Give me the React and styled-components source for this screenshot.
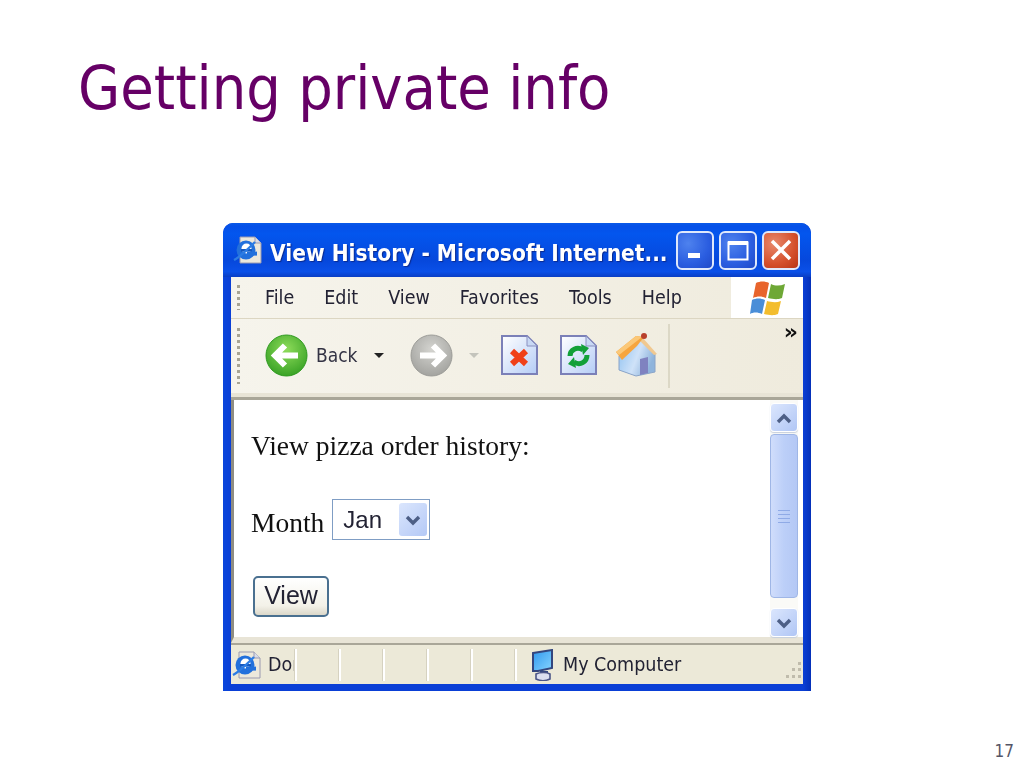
import React from 'react';
import styled, { createGlobalStyle } from 'styled-components';

const uiFont = '"DejaVu Sans Condensed", "DejaVu Sans", sans-serif';

const GlobalStyle = createGlobalStyle`
  html, body {
    margin: 0;
    padding: 0;
    background: #ffffff;
  }
`;

const Slide = styled.div`
  width: 1024px;
  height: 768px;
  display: flex;
  flex-direction: column;
  overflow: hidden;
`;

const Title = styled.h1`
  margin: 0;
  padding: 48px 0 0 78px;
  height: 223px;
  box-sizing: border-box;
  font-family: ${uiFont};
  font-stretch: condensed;
  font-weight: 400;
  font-size: 60.6px;
  line-height: 80px;
  color: #660066;
`;

const Stage = styled.div`
  flex: 1;
  padding-left: 223px;
`;

const Window = styled.div`
  width: 588px;
  height: 468px;
  box-sizing: border-box;
  display: flex;
  flex-direction: column;
  padding: 0 8px 7px 8px;
  background: linear-gradient(90deg, #0a46dc 0, #0a3fd6 8px, #0a3fd6 calc(100% - 8px), #0430b8 100%);
  border-radius: 10px 10px 0 0;
  filter: blur(0.55px);
`;

const TitleBar = styled.div`
  height: 54px;
  flex: none;
  margin: 0 -8px;
  padding: 0 11px 0 10px;
  display: flex;
  align-items: center;
  border-radius: 10px 10px 0 0;
  background: linear-gradient(180deg, #0a5ae8 0, #0550e8 6%, #0356ee 20%, #0648dc 70%, #0a50e8 90%, #0a3ec4 100%);
`;

const TitleText = styled.span`
  margin-left: 7px;
  padding-top: 5px;
  flex: 1;
  font-family: ${uiFont};
  font-stretch: condensed;
  font-weight: 700;
  font-size: 22.5px;
  color: #ffffff;
  white-space: nowrap;
  text-shadow: 1px 1px 1px #0a2a90;
`;

const WinButtons = styled.div`
  display: flex;
  gap: 5px;
`;

const WinButton = styled.div`
  width: 38px;
  height: 39px;
  box-sizing: border-box;
  display: flex;
  align-items: center;
  justify-content: center;
  border: 2px solid #dfe8fb;
  border-radius: 6px;
  background: ${p => p.$close
    ? 'radial-gradient(circle at 30% 30%, #e8896c, #d5502c 60%, #b83415)'
    : 'radial-gradient(circle at 30% 30%, #4e82ee, #2a5de0 60%, #1f49c8)'};
`;

const MenuBar = styled.div`
  height: 42px;
  flex: none;
  display: flex;
  align-items: stretch;
  background: linear-gradient(90deg, #f6f4ec, #efebdd);
  border-bottom: 1px solid #dcd6c2;
  box-sizing: border-box;
`;

const Grip = styled.div`
  width: 3px;
  margin: ${p => p.$m} 0 ${p => p.$m} 6px;
  flex: none;
  background-image: linear-gradient(180deg, #a8a595 0, #a8a595 3px, transparent 3px, transparent 6px);
  background-size: 3px 6px;
`;

const MenuItems = styled.div`
  flex: 1;
  display: flex;
  align-items: center;
  gap: 30px;
  padding-left: 25px;
  font-family: ${uiFont};
  font-stretch: condensed;
  font-size: 19.5px;
  color: #222233;
`;

const LogoBox = styled.div`
  width: 72px;
  flex: none;
  display: flex;
  align-items: center;
  justify-content: flex-start;
  background: #ffffff;
  padding-left: 19px;
  box-sizing: border-box;
`;

const ToolBar = styled.div`
  height: 81px;
  flex: none;
  box-sizing: border-box;
  display: flex;
  align-items: stretch;
  background: linear-gradient(90deg, #f6f4ec, #efebdd);
  border-bottom: 3px solid #a9a698;
  box-shadow: inset 0 -4px 0 #e8e4d6;
  padding-bottom: 4px;
`;

const ToolIcons = styled.div`
  display: flex;
  align-items: center;
  padding: 0 0 2px 25px;
  width: 430px;
  flex: none;
  box-sizing: border-box;
  border-right: 2px solid #dcd8c6;
  margin: 5px 0 5px;
  & > * {
    flex: none;
  }
`;

const BackLabel = styled.span`
  margin: 0 0 0 8px;
  width: 41px;
  font-family: ${uiFont};
  font-stretch: condensed;
  font-size: 19px;
  color: #333344;
`;

const Caret = styled.span`
  width: 0;
  height: 0;
  margin: 0 ${p => p.$right}px 0 ${p => p.$left}px;
  border-left: 5px solid transparent;
  border-right: 5px solid transparent;
  border-top: 5px solid ${p => p.$color};
`;

const IconSlot = styled.div`
  margin-right: ${p => p.$right || 0}px;
  display: flex;
`;

const Chevrons = styled.div`
  flex: 1;
  text-align: right;
  padding: 0 5px 0 0;
  font-family: "DejaVu Sans", sans-serif;
  font-weight: 700;
  font-size: 22px;
  line-height: 26px;
  color: #111111;
`;

const Content = styled.div`
  height: 243px;
  flex: none;
  box-sizing: border-box;
  display: flex;
  background: #ffffff;
  border-bottom: 6px solid #e8e4d6;
  border-left: 3px solid #8f8d82;
`;

const Page = styled.div`
  flex: 1;
  padding: 30px 0 0 17px;
  font-family: "Liberation Serif", serif;
  font-size: 27.5px;
  line-height: 32px;
  color: #111111;
`;

const MonthRow = styled.div`
  margin-top: 37px;
  height: 41px;
  display: flex;
  align-items: center;
`;

const MonthLabel = styled.span`
  padding-top: 6px;
`;

const Select = styled.div`
  width: 98px;
  height: 41px;
  margin-left: 8px;
  box-sizing: border-box;
  display: flex;
  align-items: center;
  justify-content: space-between;
  padding: 0 2px 0 10px;
  border: 1px solid #7f9dc4;
  font-family: "Liberation Sans", sans-serif;
  font-size: 24px;
  color: #222233;
`;

const SelectArrow = styled.div`
  width: 28px;
  height: 33px;
  display: flex;
  align-items: center;
  justify-content: center;
  border-radius: 3px;
  background: linear-gradient(135deg, #dbe6fd, #b4c9f6);
`;

const ViewButton = styled.div`
  width: 76px;
  height: 41px;
  margin: 36px 0 0 2px;
  padding-bottom: 3px;
  box-sizing: border-box;
  display: flex;
  align-items: center;
  justify-content: center;
  border: 2px solid #4a7090;
  border-radius: 5px;
  background: linear-gradient(180deg, #ffffff, #f3f1e8 75%, #dcd8ca);
  font-family: "Liberation Sans", sans-serif;
  font-size: 25px;
  color: #222233;
`;

const ScrollBar = styled.div`
  width: 28px;
  flex: none;
  padding-top: 3px;
  margin-right: 5px;
  display: flex;
  flex-direction: column;
  background: #fafaf7;
`;

const ScrollButton = styled.div`
  height: 29px;
  flex: none;
  display: flex;
  align-items: center;
  justify-content: center;
  box-sizing: border-box;
  border: 1px solid #ffffff;
  border-radius: 4px;
  background: linear-gradient(135deg, #dbe6fd, #b0c6f5);
  box-shadow: 0 1px 1px #c6cfdc;
`;

const Thumb = styled.div`
  height: 164px;
  margin: 2px 0 10px;
  flex: none;
  display: flex;
  flex-direction: column;
  align-items: center;
  justify-content: center;
  gap: 3px;
  box-sizing: border-box;
  border: 1px solid #9fb6e6;
  border-radius: 4px;
  background: linear-gradient(90deg, #d0ddfb, #bccff8 50%, #b4c8f5);
`;

const ThumbLine = styled.i`
  display: block;
  width: 12px;
  height: 1px;
  background: #8faae6;
`;

const StatusBar = styled.div`
  flex: 1;
  min-height: 0;
  display: flex;
  align-items: center;
  background: #ece9d8;
  border-top: 2px solid #a9a698;
  padding-left: 1px;
  font-family: ${uiFont};
  font-stretch: condensed;
  font-size: 19.5px;
  color: #222233;
`;

const StatusDone = styled.div`
  width: 27px;
  margin-left: 6px;
  overflow: hidden;
  white-space: nowrap;
`;

const StatusCell = styled.div`
  width: 42px;
  height: 32px;
  flex: none;
  border-left: 2px solid #ffffff;
  box-shadow: -1px 0 0 #d6d2c0;
`;

const StatusZone = styled.div`
  flex: 1;
  display: flex;
  align-items: center;
  gap: 9px;
  height: 32px;
  padding-left: 15px;
  border-left: 2px solid #ffffff;
  box-shadow: -1px 0 0 #d6d2c0;
`;

const ResizeGrip = styled.div`
  align-self: flex-end;
  margin: 0 0 0 auto;
  display: flex;
`;

const PageNumber = styled.div`
  padding: 0 10px 5px 0;
  text-align: right;
  font-family: ${uiFont};
  font-stretch: condensed;
  font-size: 17px;
  line-height: 24px;
  color: #555566;
`;

const IeIcon = ({ size = 30 }) => (
  <svg width={size} height={size} viewBox="0 0 30 30">
    <path d="M7 2h15l6 6v20H7z" fill="#ece8dc" stroke="#9a9ab0" />
    <path d="M22 2v6h6" fill="#d8dce8" stroke="#9a9ab0" />
    <circle cx="13" cy="15" r="9.5" fill="#2270dc" />
    <circle cx="13.5" cy="13.5" r="5" fill="#ffffff" />
    <rect x="8" y="14" width="11" height="2.6" fill="#1458c0" />
    <rect x="14" y="16.6" width="10" height="4" fill="#2270dc" />
    <path d="M1 25c4-2 12-9 21-18" stroke="#2c7ce4" strokeWidth="2.4" fill="none" />
  </svg>
);

const GoIcon = ({ dir, top, bottom, size = 43 }) => (
  <svg width={size} height={size} viewBox="0 0 43 43">
    <defs>
      <radialGradient id={`go${dir}`} cx="0.5" cy="0.35" r="0.75">
        <stop offset="0" stopColor={top} />
        <stop offset="1" stopColor={bottom} />
      </radialGradient>
    </defs>
    <circle cx="21.5" cy="21.5" r="20.5" fill={`url(#go${dir})`} stroke={bottom} />
    <path
      d={dir === 'back' ? 'M33 21.5H11M20 11.5 10 21.5l10 10' : 'M10 21.5h22M23 11.5l10 10-10 10'}
      fill="none"
      stroke="#ffffff"
      strokeWidth="6"
    />
  </svg>
);

const PageIcon = ({ children }) => (
  <svg width="37" height="40" viewBox="0 0 37 40">
    <defs>
      <linearGradient id="pageFill" x1="0" y1="0" x2="1" y2="1">
        <stop offset="0" stopColor="#ffffff" />
        <stop offset="1" stopColor="#b4ccf6" />
      </linearGradient>
    </defs>
    <path d="M1 1h25l10 10v28H1z" fill="url(#pageFill)" stroke="#7b80b8" strokeWidth="2" />
    <path d="M26 1v10h10z" fill="#c8d8f4" stroke="#8a90c0" strokeWidth="1" />
    {children}
  </svg>
);

const HomeIcon = () => (
  <svg width="44" height="46" viewBox="0 0 44 46">
    <defs>
      <linearGradient id="homeWall" x1="0" y1="0" x2="1" y2="0.4">
        <stop offset="0" stopColor="#8cc0f0" />
        <stop offset="0.6" stopColor="#cfe2f8" />
        <stop offset="1" stopColor="#8fb4dc" />
      </linearGradient>
    </defs>
    <path d="M5 24v14l17 6 19-4V22L28 7z" fill="url(#homeWall)" stroke="#8aa4c8" />
    <path d="M26 27l8-2v16l-8 2z" fill="#7f82c0" />
    <path d="M28 5l15 17-3 1L26 9z" fill="#f0c890" />
    <path d="M2 20 22 4l8 1-7 9L8 28z" fill="#f6a53e" />
    <path d="M2 20 22 4l6 1L5 23z" fill="#fbc878" />
    <circle cx="30" cy="4" r="3" fill="#b8402c" />
  </svg>
);

const WindowsLogo = () => (
  <svg width="36" height="36" viewBox="0 0 36 36">
    <path d="M6 3c4-2 9-2 13 0l-3 15c-4-2-9-2-13 0z" fill="#e8642c" />
    <path d="M21 4c4 2 9 2 14 0l-3 14c-5 2-9 1-14 0z" fill="#6ea836" />
    <path d="M2 20c4-2 9-2 13 0l-3 14c-4-2-9-2-12 0z" fill="#4a8ed8" />
    <path d="M17 21c4 1 9 2 14 0l-3 13c-5 2-9 1-14 0z" fill="#f3bd2e" />
  </svg>
);

const Chevron = ({ up, color = '#4d5f86', size = 16 }) => (
  <svg width={size} height={size * 0.75} viewBox="0 0 16 12">
    <path d={up ? 'M2 10 8 4l6 6' : 'M2 3l6 6 6-6'} fill="none" stroke={color} strokeWidth="3.4" />
  </svg>
);

const ComputerIcon = () => (
  <svg width="22" height="32" viewBox="0 0 22 32">
    <defs>
      <linearGradient id="screenFill" x1="0" y1="0" x2="1" y2="1">
        <stop offset="0" stopColor="#2f98ee" />
        <stop offset="1" stopColor="#86d4ff" />
      </linearGradient>
    </defs>
    <path d="M1 4 20 1v18L6 22H1z" fill="url(#screenFill)" stroke="#34467e" strokeWidth="2" />
    <path d="M8 22h8v3H8z" fill="#34467e" />
    <path d="M4 25c4-2 11-2 14 0v5c-4 2-10 2-14 0z" fill="#dcdff0" stroke="#4c5688" strokeWidth="1.6" />
  </svg>
);

const GripDots = () => (
  <svg width="20" height="20" viewBox="0 0 20 20" fill="#c0bcac">
    <rect x="15" y="1" width="3" height="3" />
    <rect x="9" y="7" width="3" height="3" />
    <rect x="15" y="7" width="3" height="3" />
    <rect x="3" y="14" width="3" height="3" />
    <rect x="9" y="14" width="3" height="3" />
    <rect x="15" y="14" width="3" height="3" />
  </svg>
);

const menus = ['File', 'Edit', 'View', 'Favorites', 'Tools', 'Help'];

const App = () => (
  <>
    <GlobalStyle />
    <Slide>
      <Title>Getting private info</Title>
      <Stage>
        <Window>
          <TitleBar>
            <IeIcon />
            <TitleText>View History - Microsoft Internet...</TitleText>
            <WinButtons>
              <WinButton>
                <svg width="20" height="22" viewBox="0 0 20 22"><rect x="3" y="14" width="12" height="5" fill="#fff" /></svg>
              </WinButton>
              <WinButton>
                <svg width="24" height="24" viewBox="0 0 24 24"><path d="M2.5 4.5h19v17h-19z" fill="none" stroke="#fff" strokeWidth="2" /><rect x="2" y="3" width="20" height="4" fill="#fff" /></svg>
              </WinButton>
              <WinButton $close>
                <svg width="26" height="26" viewBox="0 0 26 26"><path d="M4 4l18 18M22 4 4 22" stroke="#fff" strokeWidth="3.5" /></svg>
              </WinButton>
            </WinButtons>
          </TitleBar>
          <MenuBar>
            <Grip $m="8px" />
            <MenuItems>
              {menus.map(m => <span key={m}>{m}</span>)}
            </MenuItems>
            <LogoBox><WindowsLogo /></LogoBox>
          </MenuBar>
          <ToolBar>
            <Grip $m="9px" />
            <ToolIcons>
              <GoIcon dir="back" top="#8edc5a" bottom="#2d9a1e" />
              <BackLabel>Back</BackLabel>
              <Caret $left={17} $right={26} $color="#222222" />
              <GoIcon dir="fwd" top="#d4d4d0" bottom="#9c9c98" />
              <Caret $left={16} $right={22} $color="#c4c4bc" />
              <IconSlot $right={22}>
                <PageIcon>
                  <path d="M11 16l14 13M25 16 11 29" stroke="#f04018" strokeWidth="6" />
                </PageIcon>
              </IconSlot>
              <IconSlot $right={17}>
                <PageIcon>
                  <path d="M10 21c0-6 7-10 13-6" fill="none" stroke="#12a038" strokeWidth="5" />
                  <path d="M27 20c0 7-7 11-13 7" fill="none" stroke="#12a038" strokeWidth="5" />
                  <path d="M21 9l8 4-6 7zM16 33l-8-4 6-7z" fill="#12a038" />
                </PageIcon>
              </IconSlot>
              <HomeIcon />
            </ToolIcons>
            <Chevrons>»</Chevrons>
          </ToolBar>
          <Content>
            <Page>
              <div>View pizza order history:</div>
              <MonthRow>
                <MonthLabel>Month</MonthLabel>
                <Select>
                  Jan
                  <SelectArrow><Chevron /></SelectArrow>
                </Select>
              </MonthRow>
              <ViewButton>View</ViewButton>
            </Page>
            <ScrollBar>
              <ScrollButton><Chevron up /></ScrollButton>
              <Thumb>
                <ThumbLine /><ThumbLine /><ThumbLine /><ThumbLine />
              </Thumb>
              <ScrollButton><Chevron /></ScrollButton>
            </ScrollBar>
          </Content>
          <StatusBar>
            <IeIcon />
            <StatusDone>Done</StatusDone>
            <StatusCell />
            <StatusCell />
            <StatusCell />
            <StatusCell />
            <StatusCell />
            <StatusZone>
              <ComputerIcon />
              <span>My Computer</span>
              <ResizeGrip><GripDots /></ResizeGrip>
            </StatusZone>
          </StatusBar>
        </Window>
      </Stage>
      <PageNumber>17</PageNumber>
    </Slide>
  </>
);

export default App;
